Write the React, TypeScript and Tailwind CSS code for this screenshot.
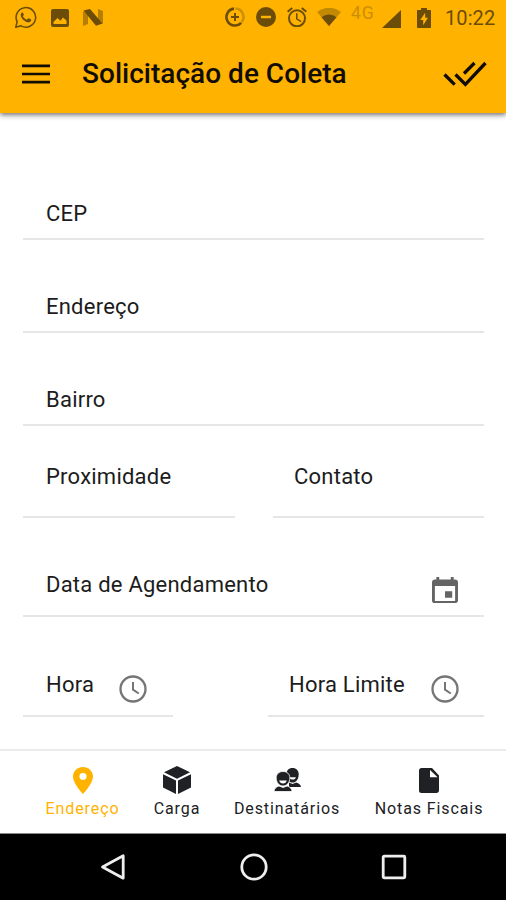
import React from "react";

/**
 * Pickup request screen: app bar, address form, bottom tabs and system navigation.
 */

interface GlyphProps {
    viewBox: string;
    className?: string;
    children: React.ReactNode;
}

const Glyph: React.FC<GlyphProps> = ({ viewBox, className = "", children }) => (
    <svg viewBox={viewBox} className={`shrink-0 ${className}`} fill="currentColor" preserveAspectRatio="none" aria-hidden="true">
        {children}
    </svg>
);

const ClockIcon = ({ className = "" }: { className?: string }) => (
    <Glyph viewBox="0 0 28 28" className={`h-7 w-7 text-[#757575] ${className}`}>
        <circle cx="14" cy="14" r="12.5" fill="none" stroke="currentColor" strokeWidth="2.3" />
        <path d="M14 7v7.7l5.8 3.8" fill="none" stroke="currentColor" strokeWidth="2" />
    </Glyph>
);

const StatusBar = () => (
    <div className="flex h-9 items-start text-[#6b4c08]">
        {/* Notifications */}
        <Glyph viewBox="0 0 24 24" className="ml-3.5 mt-[6px] h-[23px] w-[23px]">
            <path
                d="M1.8 22.2l1.500-5.700A10.200 10.200 0 1 1 7.300 20.700z"
                fill="none"
                stroke="currentColor"
                strokeWidth="1.6"
                strokeLinejoin="round"
            />
            <path d="M8.700 6.700c-.5 0-1.700.8-1.700 2.700 0 3.600 5.200 8 8.600 7.600 1.500-.2 2.300-1.300 2.300-2.500 0-.4-.1-.5-.4-.7l-2.200-1c-.3-.1-.5 0-.7.200l-.9 1.100c-.2.200-.4.200-.6.100-1.700-.7-2.900-1.800-3.700-3.300-.1-.2 0-.4.100-.5l.7-.9c.1-.2.100-.4 0-.6l-.9-2c-.1-.2-.3-.3-.6-.200z" />
        </Glyph>
        <Glyph viewBox="0 0 18 18" className="ml-[14px] mt-[9px] h-[18px] w-[18px]">
            <path
                d="M2 0h14a2 2 0 0 1 2 2v14a2 2 0 0 1-2 2H2a2 2 0 0 1-2-2V2a2 2 0 0 1 2-2zM2.500 15h13v-3.500L12 8.500l-2.500 3.200L6.500 9l-4 4z"
                fillRule="evenodd"
            />
        </Glyph>
        <Glyph viewBox="0 0 20 17" className="ml-[14px] mt-[9px] h-[17px] w-5">
            <path d="M0 2l5 4v9l-5 2zM15 0l5 2v13l-5-4z" opacity=".5" />
            <path d="M0.500 1.500L7 0l12.500 14.500-6.500 2.200z" />
        </Glyph>

        {/* System state */}
        <Glyph viewBox="0 0 20 20" className="ml-[122px] mt-[7px] h-5 w-5">
            <path d="M10.500 1.500a8.500 8.500 0 0 1 6.200 13.700" fill="none" stroke="currentColor" strokeWidth="2.500" opacity=".35" />
            <path d="M9 1.600a8.500 8.500 0 1 0 7.200 14.200" fill="none" stroke="currentColor" strokeWidth="2.600" />
            <path d="M9 6h2v3h3v2h-3v3H9v-3H6V9h3z" />
        </Glyph>
        <Glyph viewBox="2 2 20 20" className="ml-[11px] mt-[7px] h-5 w-5">
            <path d="M12 2a10 10 0 1 0 0 20 10 10 0 0 0 0-20zm5 11.300H7v-2.600h10z" />
        </Glyph>
        <Glyph viewBox="2 1.700 20 20" className="ml-[11px] mt-[7px] h-5 w-5">
            <path d="M22 5.720l-4.600-3.860-1.290 1.530 4.600 3.860L22 5.720zM7.880 3.390L6.600 1.860 2 5.710l1.290 1.530 4.590-3.850zM12.500 8H11v6l4.750 2.850.75-1.230-4-2.370V8zM12 4a9 9 0 1 0 0 18 9 9 0 0 0 0-18zm0 16a7 7 0 1 1 0-14 7 7 0 0 1 0 14z" />
        </Glyph>
        <Glyph viewBox="0 0 24 18" className="ml-[10px] mt-[8px] h-[18px] w-6">
            <path d="M0 4a19 19 0 0 1 24 0L12 18z" opacity=".4" />
            <path d="M4.500 9.200a12 12 0 0 1 15 0L12 18z" />
        </Glyph>
        <span className="ml-[10px] mt-[5px] w-6 text-[17.5px] leading-4 tracking-[0.8px] text-[#cb8e05]">4G</span>
        <Glyph viewBox="0 0 20 18" className="ml-[7px] mt-[10px] h-[18px] w-[19px]">
            <path d="M20 0v18H0z" />
        </Glyph>
        <Glyph viewBox="0 0 14 20" className="ml-4 mt-[8px] h-5 w-3.5">
            <path d="M4 0h6v2h3.200c.5 0 .8.300.8.800v16.400c0 .5-.3.800-.8.800H.8c-.5 0-.8-.3-.8-.8V2.800C0 2.300.3 2 .8 2H4zM8.200 4.800L3.200 12H6.200v5.200l4.800-7.500H8.200z" />
        </Glyph>
        <span className="ml-[14px] mt-[8px] text-[20px] leading-5 tracking-[0.1px]">10:22</span>
    </div>
);

const AppBar = () => (
    <header className="relative h-[113px] shrink-0 bg-[#ffb300] shadow-[0_2px_5px_rgba(0,0,0,0.55)]">
        <StatusBar />
        <div className="flex h-[76px] items-center text-[#120d02]">
            <Glyph viewBox="0 0 28 20" className="ml-[22px] h-5 w-7">
                <path d="M0 0.500h28v2.700H0zM0 8.650h28v2.700H0zM0 16.800h28v2.700H0z" />
            </Glyph>
            <h1 className="ml-8 text-[28px] font-medium leading-8 tracking-[0.02px]">Solicitação de Coleta</h1>
            <Glyph viewBox="0 0 44 26" className="ml-auto mr-[19px] h-[26px] w-11">
                <path d="M1.500 13.500l10.200 10.200M12.500 13.500L22.400 23.400 42.500 2M21 12.500L31.500 2" fill="none" stroke="currentColor" strokeWidth="3.300" />
            </Glyph>
        </div>
    </header>
);

interface FieldProps {
    label: string;
    className?: string;
    children?: React.ReactNode;
}

const Field: React.FC<FieldProps> = ({ label, className = "", children }) => (
    <div className={`flex items-end border-b-2 border-[#e6e6e6] text-[#1c1c1c] ${className}`}>
        <label className="whitespace-nowrap text-[22px] leading-6 tracking-[0.23px]">{label}</label>
        {children}
    </div>
);

const AddressForm = () => (
    <main className="h-[636px] shrink-0 pl-[23px] pr-[22px]">
        <Field label="CEP" className="h-[127px] pb-[12px] pl-[23px]" />
        <Field label="Endereço" className="h-[93px] pb-[12px] pl-[23px]" />
        <Field label="Bairro" className="h-[93px] pb-[12px] pl-[23px]" />
        <div className="flex justify-between">
            <Field label="Proximidade" className="h-[92px] w-[212px] pb-[27px] pl-[23px]" />
            <Field label="Contato" className="h-[92px] w-[211px] pb-[27px] pl-[21px]" />
        </div>
        <Field label="Data de Agendamento" className="h-[99px] pb-[18px] pl-[23px]">
            <Glyph viewBox="3 1 18 20" className="-mb-[6px] ml-auto mr-[26px] h-[26px] w-[26px] text-[#646464]">
                <path d="M17 12h-5v5h5v-5zM16 1v2H8V1H6v2H5c-1.110 0-1.990.9-1.990 2L3 19a2 2 0 0 0 2 2h14c1.100 0 2-.9 2-2V5c0-1.100-.9-2-2-2h-1V1h-2zm3 18.500H5V8h14v11.500z" />
            </Glyph>
        </Field>
        <div className="flex justify-between">
            <Field label="Hora" className="h-[100px] w-[150px] pb-[18px] pl-[23px]">
                <ClockIcon className="-mb-[6px] ml-auto mr-[26px]" />
            </Field>
            <Field label="Hora Limite" className="h-[100px] w-[216px] pb-[18px] pl-[21px]">
                <ClockIcon className="-mb-[6px] ml-auto mr-[25px]" />
            </Field>
        </div>
    </main>
);

interface TabProps {
    label: string;
    className?: string;
    children: React.ReactNode;
}

const Tab: React.FC<TabProps> = ({ label, className = "", children }) => (
    <button className={`flex shrink-0 flex-col items-center ${className}`}>
        <span className="flex h-7 items-center">{children}</span>
        <span className="mt-[5px] whitespace-nowrap text-[16px] leading-5 tracking-[0.9px]">{label}</span>
    </button>
);

const TabBar = () => (
    <nav className="flex h-[85px] shrink-0 items-start border-b border-t-2 border-b-[#888] border-t-[#ebebeb] pt-[15px] text-[#202124]">
        <Tab label="Endereço" className="ml-[41px] w-[83px] text-[#ffb300]">
            <Glyph viewBox="5 2 14 20" className="h-[27px] w-5">
                <path d="M12 2C8.130 2 5 5.130 5 9c0 5.250 7 13 7 13s7-7.750 7-13c0-3.870-3.130-7-7-7zm0 9.500a2.500 2.500 0 0 1 0-5 2.500 2.500 0 0 1 0 5z" />
            </Glyph>
        </Tab>
        <Tab label="Carga" className="ml-[23px] w-[60px]">
            <Glyph viewBox="0 0 28 28" className="h-7 w-7">
                <path d="M14 0l13 6.300L14 12.800 1 6.300zM0 8.200l13 6.300V28L0 21.400zM28 8.200L15 14.500V28l13-6.600z" />
            </Glyph>
        </Tab>
        <Tab label="Destinatários" className="ml-[20px] w-[120px]">
            <Glyph viewBox="0 0 27 24" className="h-6 w-[27px]">
                <path d="M18.500 0c3.800 0 6.200 2.700 6.200 6.200 0 5-2.700 8.300-6.200 8.300s-6.200-3.300-6.200-8.300C12.300 2.700 14.700 0 18.500 0z" />
                <path d="M15 14.500l3.500 1.500 3.700-1.500c2.800.9 4.300 2 4.800 4.500H15z" />
                <path d="M15.500 9.200h6.400c-.4 1.500-1.500 2.400-3.200 2.400s-2.800-.9-3.200-2.400z" className="fill-white" />
                <path
                    d="M9 3.500c4.200 0 6.800 2.600 6.800 6.300 0 4.800-2.900 8.200-6.800 8.200s-6.800-3.400-6.800-8.200c0-3.700 2.600-6.300 6.800-6.300z"
                    stroke="white"
                    strokeWidth=".8"
                />
                <path d="M5 18l4 1.500L13.200 18c2.900.8 4.500 2.700 4.900 5.500H-.1C.3 20.700 2 18.800 5 18z" stroke="white" strokeWidth=".8" />
                <path d="M5.200 12.500h7.600c-.5 1.900-1.800 2.900-3.800 2.900s-3.300-1-3.800-2.900z" className="fill-white" />
            </Glyph>
        </Tab>
        <Tab label="Notas Fiscais" className="ml-[21px] w-[122px]">
            <Glyph viewBox="0 0 20 25" className="h-[25px] w-5">
                <path d="M2.500 0H13l7 7.500v15c0 1.400-1.100 2.500-2.500 2.500h-15A2.500 2.500 0 0 1 0 22.500v-20C0 1.100 1.100 0 2.500 0zM11 2v7.200h7.600z" fillRule="evenodd" />
            </Glyph>
        </Tab>
    </nav>
);

const SystemNavigation = () => (
    <footer className="flex h-[66px] shrink-0 items-center bg-black text-[#eee]">
        <Glyph viewBox="0 0 26 28" className="ml-[100px] h-7 w-[26px]">
            <path d="M23.200 2.800v22.400L2.500 14z" fill="none" stroke="currentColor" strokeWidth="2.800" strokeLinejoin="round" />
        </Glyph>
        <Glyph viewBox="0 0 28 28" className="ml-[114px] h-7 w-7">
            <circle cx="14" cy="14" r="12.200" fill="none" stroke="currentColor" strokeWidth="2.800" />
        </Glyph>
        <Glyph viewBox="0 0 26 26" className="ml-[113px] h-[26px] w-[26px]">
            <rect x="2.200" y="2.200" width="21.600" height="21.600" rx="1" fill="none" stroke="currentColor" strokeWidth="2.800" />
        </Glyph>
    </footer>
);

export default function App() {
    return (
        <div className="flex h-[900px] w-[506px] flex-col overflow-hidden bg-white font-['Roboto','Liberation_Sans',sans-serif]">
            <AppBar />
            <AddressForm />
            <TabBar />
            <SystemNavigation />
        </div>
    );
}
